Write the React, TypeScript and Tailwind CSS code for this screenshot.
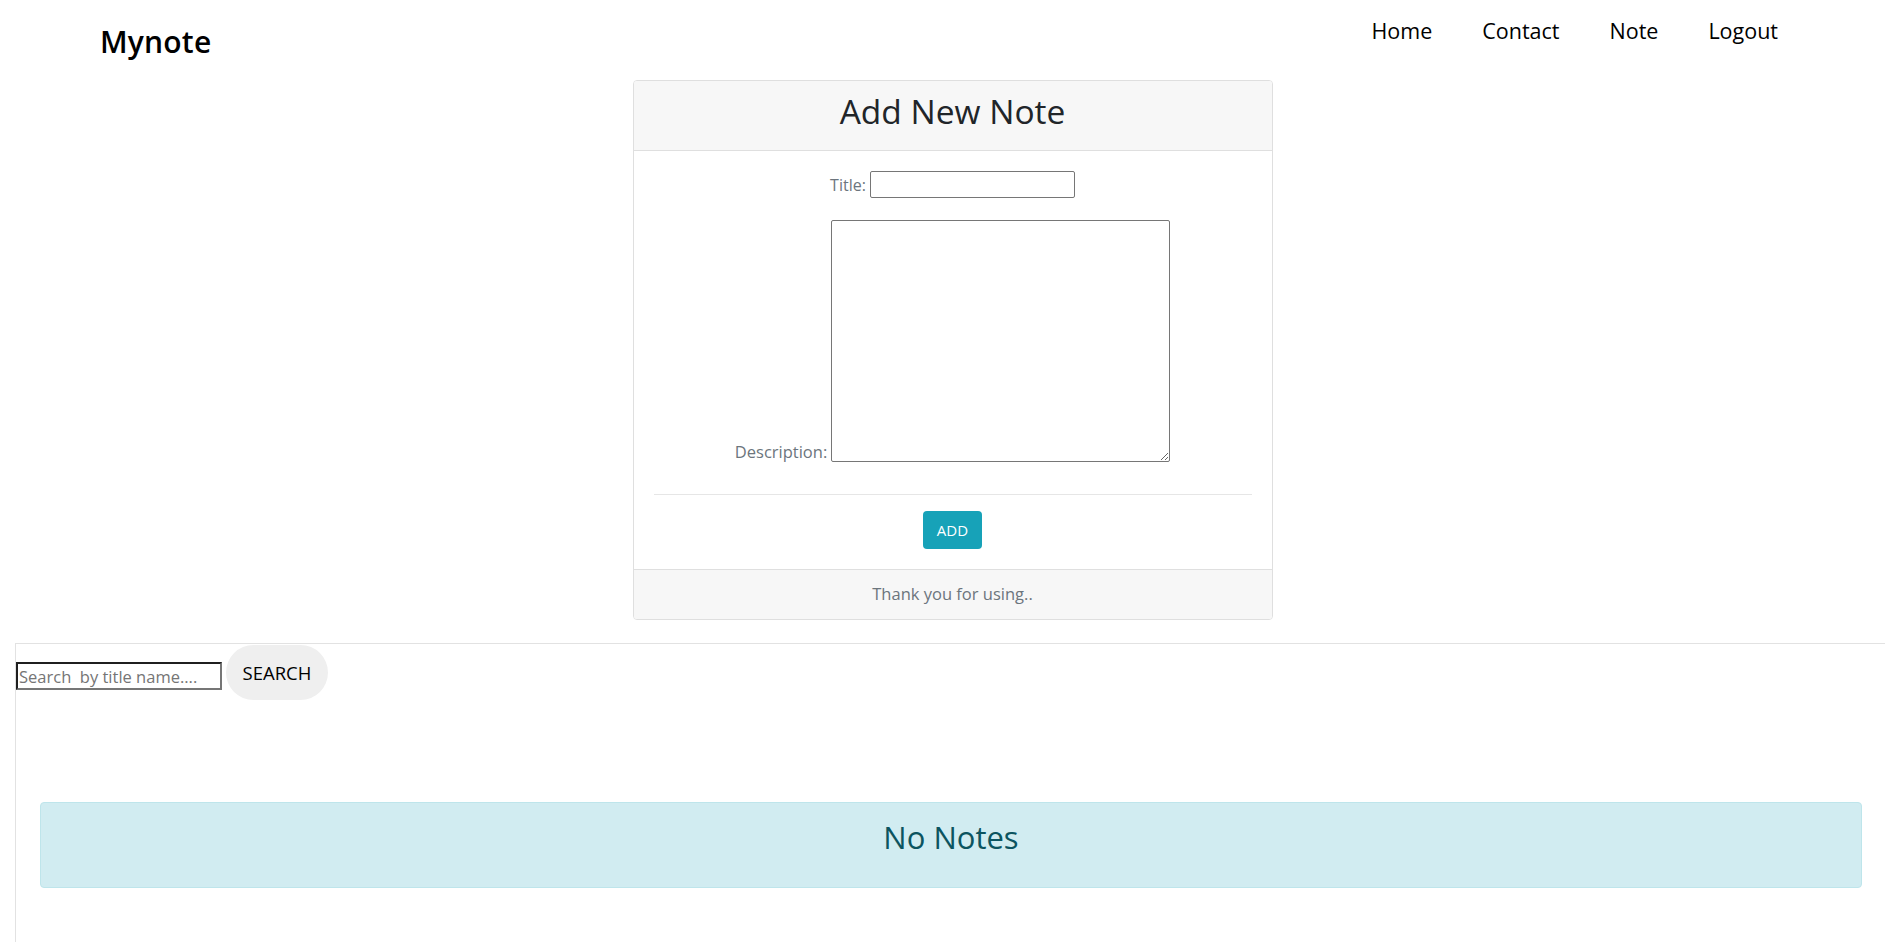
import React from 'react';

export default function App() {
  return (
    <div className="min-h-screen bg-white font-['Open_Sans',sans-serif] text-[#212529] flex flex-col">
      {/* navbar */}
      <nav className="flex items-start justify-between pl-[100px] pr-[107px] h-[80px]">
        <a className="mt-[19px] text-[30px] font-semibold text-black tracking-[0.2px]">Mynote</a>
        <ul className="flex gap-[50px] mt-[15px]">
          <li><a className="text-[21.5px] text-black">Home</a></li>
          <li><a className="text-[21.5px] text-black">Contact</a></li>
          <li><a className="text-[21.5px] text-black">Note</a></li>
          <li><a className="text-[21.5px] text-black">Logout</a></li>
        </ul>
      </nav>

      {/* add note card */}
      <div className="flex justify-center pl-[20px]">
        <div className="w-[640px] border border-[#dfdfdf] rounded-[4px] overflow-hidden">
          <div className="h-[70px] bg-[#f7f7f7] border-b border-[#dfdfdf] flex items-center justify-center">
            <h2 className="text-[33.5px] font-normal mb-[8px]">Add New Note</h2>
          </div>
          <div className="px-[20px] pt-[20px] pb-[20px]">
            <div className="flex items-center justify-center gap-[4px]">
              <label className="text-[16px] text-[#6c757d]">Title:</label>
              <input type="text" className="w-[205px] h-[27px] border border-[#767676] rounded-[2px]" />
            </div>
            <div className="flex items-end justify-center gap-[4px] mt-[22px]">
              <label className="text-[16.5px] text-[#6c757d] leading-[20px]">Description:</label>
              <textarea className="w-[339px] h-[242px] border border-[#767676] rounded-[2px]" />
            </div>
            <hr className="mt-[32px] border-[#e6e6e6]" />
            <div className="flex justify-center mt-[16px]">
              <button className="w-[59px] h-[38px] rounded-[4px] bg-[#17a2b8] text-white text-[15px] font-medium">ADD</button>
            </div>
          </div>
          <div className="h-[50px] bg-[#f7f7f7] border-t border-[#dfdfdf] flex items-center justify-center">
            <span className="text-[16.5px] text-[#6c757d]">Thank you for using..</span>
          </div>
        </div>
      </div>

      {/* notes section */}
      <section className="flex-1 mt-[23px] ml-[15px] border-t border-l border-[#e2e2e2] flex flex-col">
        <div className="flex items-center gap-[4px] mt-[1px]">
          <input
            type="text"
            placeholder="Search  by title name...."
            className="w-[206px] h-[28px] mt-[7px] border-2 border-t-[#1f1f1f] border-l-[#1f1f1f] border-b-[#767676] border-r-[#767676] text-[16.5px] px-[1px] placeholder:text-[#757575]"
          />
          <button className="w-[102px] h-[55px] rounded-full bg-[#efefef] text-black text-[18.5px]">SEARCH</button>
        </div>
        <div className="mt-[102px] ml-[24px] mr-[23px] h-[86px] bg-[#d1ecf1] border border-[#bee5eb] rounded-[4px] flex justify-center">
          <h3 className="mt-[11px] text-[31px] text-[#0c5460] font-normal">No Notes</h3>
        </div>
      </section>
    </div>
  );
}
